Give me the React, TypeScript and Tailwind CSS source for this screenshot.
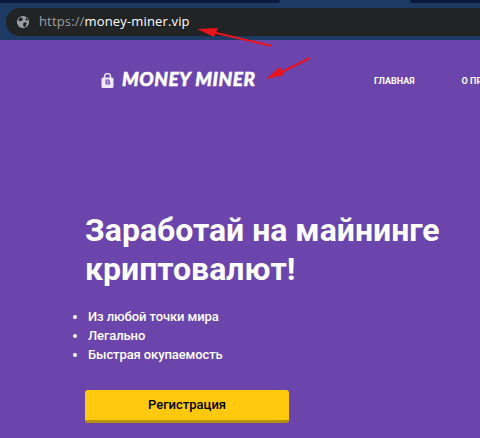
export default function App() {
  return (
    <div className="relative h-[438px] w-[480px] overflow-hidden bg-[#6b45ab] font-['Roboto',sans-serif] text-white">
      {/* browser chrome */}
      <div className="flex h-[40px] items-start bg-[#1c3a63] pt-2">
        <div className="absolute left-0 top-0 h-[3px] w-[280px] rounded-br-[3px] bg-[#0b1a3a]" />
        <div className="absolute right-0 top-0 h-[3px] w-[70px] rounded-bl-[3px] bg-[#0b1a3a]" />
        <div className="ml-[6px] flex h-[28px] w-full items-center rounded-l-[14px] bg-[#222325] pl-[10px]">
          <svg width="14" height="14" viewBox="0 0 16 16" className="shrink-0">
            <circle cx="8" cy="8" r="7" fill="#9aa0a6" />
            <path d="M5 2.5l3 1.5-1 2.5-3 .5-1.5-1.5zM9 8l3.5 1-1.5 4-2 1-1-3zM12 3l2 3-2 .5-1.5-2z" fill="#222325" />
          </svg>
          <span className="ml-[9px] font-['Open_Sans',sans-serif] text-[13px] tracking-[0.15px] text-[#9aa0a6]">
            https://<span className="text-white">money-miner.vip</span>
          </span>
        </div>
      </div>

      {/* site header */}
      <header className="flex h-[77px] items-center pl-[101px]">
        <svg width="13" height="15" viewBox="0 0 13 15" className="mt-[3px] shrink-0">
          <path d="M3.5 5V3.5a3 3 0 0 1 6 0V5" fill="none" stroke="#f1e9fb" strokeWidth="1.4" />
          <rect x="0.5" y="4.5" width="12" height="10.5" rx="1.5" fill="#f1e9fb" />
          <path d="M4.5 6.5h3a1.3 1.3 0 0 1 .8 2.3 1.4 1.4 0 0 1-.8 2.7h-3zM5.6 7.5v1h1.6a.5.5 0 0 0 0-1zM5.6 9.5v1h1.8a.5.5 0 0 0 0-1z" fill="#6b45ab" fillRule="evenodd" />
        </svg>
        <span className="ml-[8px] mt-[1px] w-[252px] shrink-0 font-['Lato',sans-serif] text-[19px] font-black italic tracking-[0.5px] [-webkit-text-stroke:0.5px_white]">
          MONEY MINER
        </span>
        <nav className="mt-[7px] flex gap-[47px] text-[9px] font-bold">
          <span className="whitespace-nowrap">ГЛАВНАЯ</span>
          <span className="whitespace-nowrap">О ПРОЕКТЕ</span>
        </nav>
      </header>

      {/* hero */}
      <main className="pl-[85px] pt-[94px]">
        <h1 className="text-[32px] leading-[39px] font-bold">
          Заработай на майнинге
          <br />
          криптовалют!
        </h1>
        <ul className="mt-[18px] list-outside list-disc pl-[3px] text-[13px] leading-[19px] font-medium tracking-[-0.1px]">
          <li>Из любой точки мира</li>
          <li>Легально</li>
          <li>Быстрая окупаемость</li>
        </ul>
        <button className="mt-[26px] block h-[33px] w-[204px] rounded-[3px] border-b-[3px] border-[#b8900f] bg-[#ffca0d] text-center text-[13px] font-medium text-black">
          Регистрация
        </button>
      </main>

      {/* red annotation arrows */}
      <svg className="absolute inset-0" width="480" height="438" viewBox="0 0 480 438">
        <path d="M272 46L212 32" stroke="#e8131b" strokeWidth="2" fill="none" />
        <path d="M197 29L218 28L214 37Z" fill="#e8131b" />
        <path d="M310 58L278 74" stroke="#e8131b" strokeWidth="2" fill="none" />
        <path d="M266 79L280 67L284 75Z" fill="#e8131b" />
      </svg>
    </div>
  );
}
